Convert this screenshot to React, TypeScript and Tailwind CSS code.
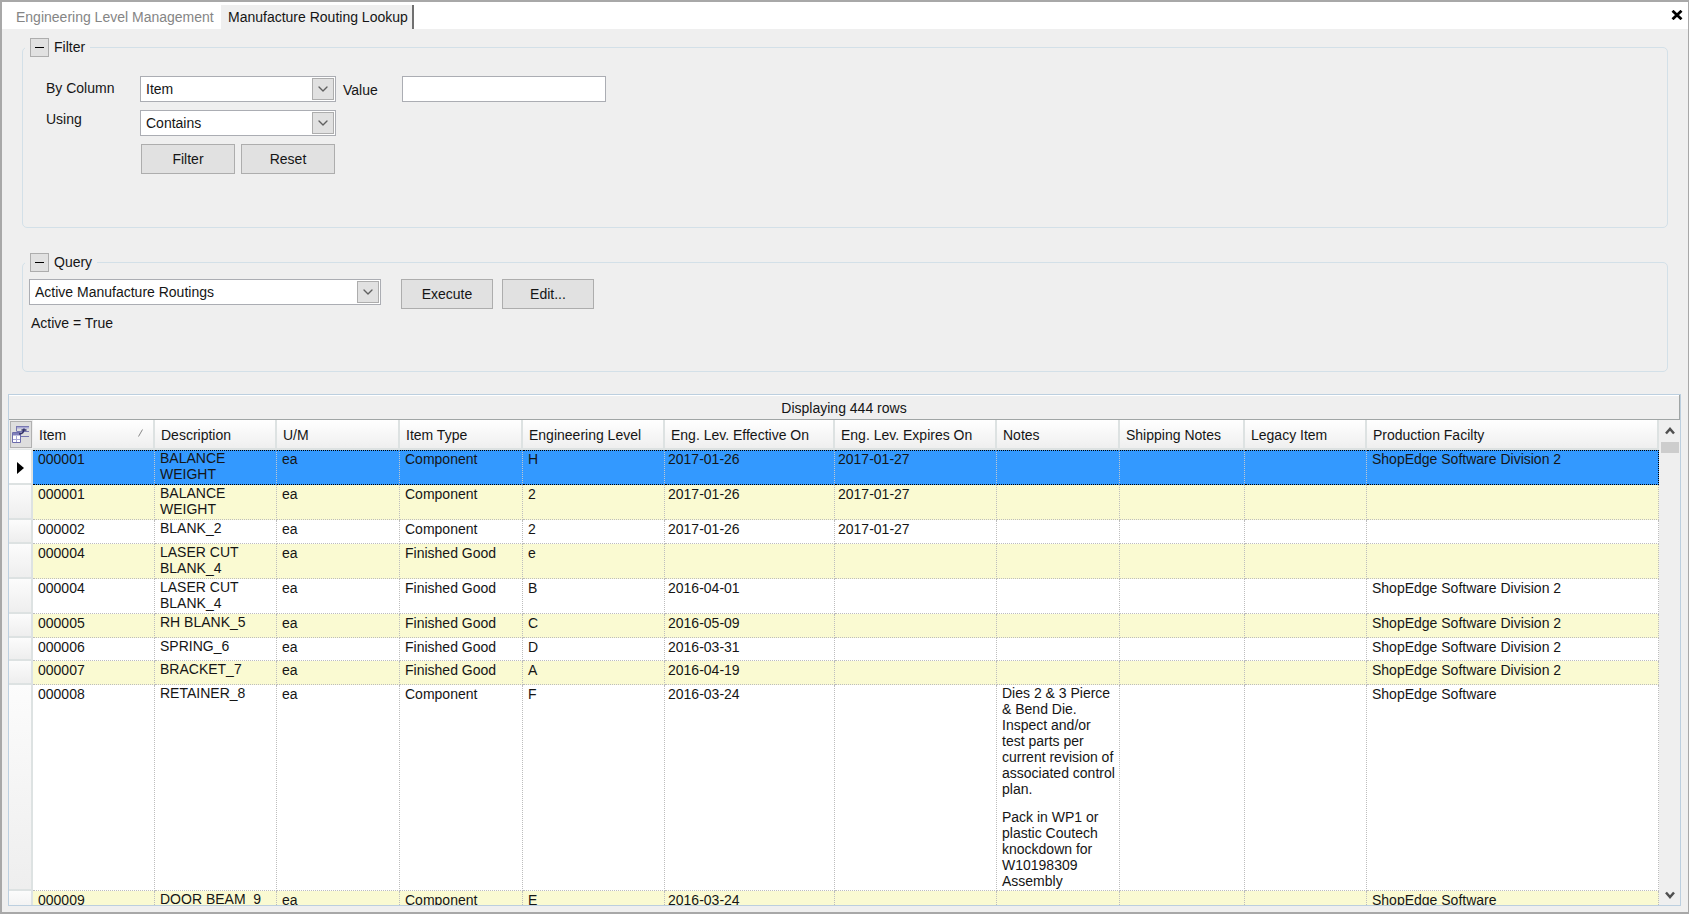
import { useState, type ReactNode } from "react";
import { ChevronDown } from "lucide-react";

type Row = {
  item: string;
  description: string;
  type: string;
  level: string;
  effective?: string;
  expires?: string;
  notes?: string[];
  facility?: string;
  height: string;
};

const ROWS: Row[] = [
  { item: "000001", description: "BALANCE WEIGHT", type: "Component", level: "H", effective: "2017-01-26", expires: "2017-01-27", facility: "ShopEdge Software Division 2", height: "h-[35px]" },
  { item: "000001", description: "BALANCE WEIGHT", type: "Component", level: "2", effective: "2017-01-26", expires: "2017-01-27", height: "h-[35px]" },
  { item: "000002", description: "BLANK_2", type: "Component", level: "2", effective: "2017-01-26", expires: "2017-01-27", height: "h-6" },
  { item: "000004", description: "LASER CUT BLANK_4", type: "Finished Good", level: "e", height: "h-[35px]" },
  { item: "000004", description: "LASER CUT BLANK_4", type: "Finished Good", level: "B", effective: "2016-04-01", facility: "ShopEdge Software Division 2", height: "h-[35px]" },
  { item: "000005", description: "RH BLANK_5", type: "Finished Good", level: "C", effective: "2016-05-09", facility: "ShopEdge Software Division 2", height: "h-6" },
  { item: "000006", description: "SPRING_6", type: "Finished Good", level: "D", effective: "2016-03-31", facility: "ShopEdge Software Division 2", height: "h-[23px]" },
  { item: "000007", description: "BRACKET_7", type: "Finished Good", level: "A", effective: "2016-04-19", facility: "ShopEdge Software Division 2", height: "h-6" },
  {
    item: "000008", description: "RETAINER_8", type: "Component", level: "F", effective: "2016-03-24", facility: "ShopEdge Software", height: "h-[206px]",
    notes: [
      "Dies 2 & 3 Pierce & Bend Die.\nInspect and/or\ntest parts per\ncurrent revision of associated control plan.",
      "Pack in WP1 or plastic Coutech knockdown for W10198309 Assembly",
    ],
  },
  { item: "000009", description: "DOOR BEAM_9", type: "Component", level: "E", effective: "2016-03-24", facility: "ShopEdge Software", height: "h-6" },
];

const HEADERS = [
  "Item", "Description", "U/M", "Item Type", "Engineering Level", "Eng. Lev. Effective On",
  "Eng. Lev. Expires On", "Notes", "Shipping Notes", "Legacy Item", "Production Facilty",
];

function Combo({ id, label, value, width }: { id: string; label?: string; value: string; width: string }) {
  return (
    <div className={`relative ${width}`}>
      <select id={id} aria-label={label} defaultValue={value} className="h-[26px] w-full appearance-none border border-[#abadb3] bg-white pr-6 pl-[5px] outline-none">
        <option>{value}</option>
      </select>
      <span className="pointer-events-none absolute top-[2px] right-[2px] flex h-[22px] w-[22px] items-center justify-center border border-[#adadad] bg-[#e1e1e1] text-[#606060]">
        <ChevronDown size={16} strokeWidth={2} />
      </span>
    </div>
  );
}

function PushButton({ children, width }: { children: ReactNode; width: string }) {
  return <button type="button" className={`h-[30px] border border-[#adadad] bg-[#e1e1e1] ${width}`}>{children}</button>;
}

function Group({ title, height, children }: { title: string; height: string; children: ReactNode }) {
  const [open, setOpen] = useState(true);
  return (
    <fieldset className={`rounded-[5px] border border-[#d3e0e8] px-[2px] ${open ? height : ""}`}>
      <legend className="flex items-center gap-[5px] px-[5px] leading-[19px]">
        <button type="button" aria-label={`Toggle ${title}`} aria-expanded={open} onClick={() => setOpen(!open)} className="flex h-[19px] w-[19px] items-center justify-center border border-[#adadad] bg-[#e1e1e1]">
          <span className="h-px w-[9px] bg-black" />
        </button>
        {title}
      </legend>
      {open && children}
    </fieldset>
  );
}

function ColumnChooserIcon() {
  return (
    <svg width="18" height="19" viewBox="0 0 18 19" fill="none">
      <path d="M4.500 1.500h12.500M4.500 1v5M4.500 6.500h12.500M9 11.500h8" stroke="#7777b0" />
      <path d="M5 2h12v1.500H5z" fill="#a9a9d6" />
      <path d="M.5 7.500h8v10h-8z" fill="#fff" stroke="#6c6cab" />
      <path d="M1 8h7v2.500H1z" fill="#8080bb" />
      <path d="M1 14.500h7M4.500 11v6" stroke="#a9a9d6" />
      <path d="M7 9c3 0 5-1 5-5.500M9.500 5h5" stroke="#2f2f66" strokeWidth="1.500" />
    </svg>
  );
}

export default function App() {
  return (
    <div className="flex h-screen flex-col overflow-hidden border-t-2 border-r border-b-2 border-l-2 border-[#a8a8a8] bg-[#efefef] font-['Liberation_Sans',Arial,sans-serif] text-[14px] leading-4 text-[#151515]">
      <nav className="flex h-[27px] shrink-0 items-end bg-white">
        <button type="button" className="h-6 w-[219px] pb-px pl-[14px] text-left text-[#858585]">Engineering Level Management</button>
        <button type="button" className="h-6 border-r-2 border-[#707070] bg-[#efefef] pr-1 pb-px pl-[7px]">Manufacture Routing Lookup</button>
        <button type="button" aria-label="Close" className="mr-[5px] mb-[9px] ml-auto">
          <svg width="12" height="10" viewBox="0 0 12 10" fill="none" stroke="#000" strokeWidth="2.800"><path d="M1.500 .8 10.500 9.200M10.500 .8 1.500 9.200" /></svg>
        </button>
      </nav>

      <div className="flex shrink-0 flex-col gap-[25px] pt-[9px] pr-[20px] pl-[20px]">
        <Group title="Filter" height="h-[190px]">
          <div className="grid grid-cols-[94px_196px_auto_1fr] items-center gap-y-2 pt-[19px] pl-[21px]">
            <label htmlFor="column" className="pb-[2px]">By Column</label>
            <Combo id="column" value="Item" width="w-[196px]" />
            <label htmlFor="value" className="w-[66px] pt-[2px] pl-[7px]">Value</label>
            <input id="value" className="h-[26px] w-[204px] border border-[#abadb3] bg-white px-1 outline-none" />
            <label htmlFor="using" className="pb-2">Using</label>
            <Combo id="using" value="Contains" width="w-[196px]" />
            <div className="col-span-2" />
            <div className="col-start-2 flex gap-[6px] pl-px">
              <PushButton width="w-[94px]">Filter</PushButton>
              <PushButton width="w-[94px]">Reset</PushButton>
            </div>
          </div>
        </Group>

        <Group title="Query" height="h-[119px]">
          <div className="flex items-start pt-[7px] pl-1">
            <Combo id="query" label="Saved query" value="Active Manufacture Routings" width="w-[352px]" />
            <div className="ml-5 flex gap-[9px]">
              <PushButton width="w-[92px]">Execute</PushButton>
              <PushButton width="w-[92px]">Edit...</PushButton>
            </div>
          </div>
          <p className="pt-[6px] pl-[6px]">Active = True</p>
        </Group>
      </div>

      <section className="mt-[22px] mr-[7px] mb-[6px] ml-[6px] flex min-h-0 flex-1 flex-col border border-[#bccfdf] bg-[#efefef]">
        <div className="h-[25px] shrink-0 border-r border-b border-[#a0a5a5] pt-[5px] text-center shadow-[inset_0_1px_0_#fff]">Displaying 444 rows</div>
        <div className="flex min-h-0 flex-1">
          <div className="min-w-0 flex-1 overflow-y-auto [scrollbar-width:none]">
            <table className="w-full table-fixed border-separate border-spacing-0">
              <colgroup>
                <col className="w-[24px]" />
                <col className="w-[122px]" />
                <col className="w-[122px]" />
                <col className="w-[123px]" />
                <col className="w-[123px]" />
                <col className="w-[142px]" />
                <col className="w-[170px]" />
                <col className="w-[162px]" />
                <col className="w-[123px]" />
                <col className="w-[125px]" />
                <col className="w-[122px]" />
                <col />
              </colgroup>
              <thead className="sticky top-0">
                <tr className="h-[30px]">
                  <th className="border-b border-[#e4e8e8] bg-[#efefef] p-0">
                    <span className="ml-px flex h-[27px] w-[22px] items-center justify-center border border-[#b0b0b0] bg-[#dedede]"><ColumnChooserIcon /></span>
                  </th>
                  {HEADERS.map((h) => (
                    <th key={h} className="border-r-2 border-b-2 border-[#dde2e2] bg-linear-to-b from-white to-[#efefef] p-0 pt-[2px] pl-[6px] text-left font-normal whitespace-nowrap">
                      <span className="flex items-center justify-between pr-[9px]">
                        {h}
                        {h === "Item" && <svg width="6" height="8" viewBox="0 0 6 8" className="mb-1"><path d="M.5 7.500 4.500 .5" stroke="#888" fill="none" /></svg>}
                      </span>
                    </th>
                  ))}
                </tr>
              </thead>
              <tbody>
                {ROWS.map((r, i) => {
                  const selected = i === 0;
                  const base = selected
                    ? "border-t border-b border-dotted border-y-black border-r border-r-[#c0c8d0] p-0 align-top last:border-r-black"
                    : "border-r border-b border-dotted border-[#bdbdbd] p-0 pt-px align-top";
                  const cell = `${base} pl-[5px]`;
                  const date = `${base} pl-[3px]`;
                  return (
                    <tr key={i} className={`${r.height} ${selected ? "bg-[#3399ff]" : i % 2 ? "bg-[#fafad2]" : "bg-white"}`}>
                      <td className={`border-r-2 border-b-2 border-[#dde2e2] p-0 ${selected ? "bg-white pt-[2px]" : "bg-linear-to-b from-[#fcfcfc] to-[#eeeeee]"}`}>
                        {selected && <svg width="7" height="12" viewBox="0 0 7 12" className="ml-2"><path d="M0 0 7 6 0 12z" fill="#000" /></svg>}
                      </td>
                      <td className={cell}>{r.item}</td>
                      <td className={cell}><div className="-mt-px">{r.description}</div></td>
                      <td className={cell}>ea</td>
                      <td className={cell}>{r.type}</td>
                      <td className={cell}>{r.level}</td>
                      <td className={date}>{r.effective}</td>
                      <td className={date}>{r.expires}</td>
                      <td className={cell}>
                        {r.notes && <div className="-mt-px flex flex-col gap-[12px] whitespace-pre-line">{r.notes.map((n) => <p key={n}>{n}</p>)}</div>}
                      </td>
                      <td className={cell} />
                      <td className={cell} />
                      <td className={cell}>{r.facility}</td>
                    </tr>
                  );
                })}
              </tbody>
            </table>
          </div>
          <div className="flex w-[21px] flex-col items-center bg-[#efefef] pt-[7px] pb-[6px] text-[#505050]">
            <svg width="10" height="8" viewBox="0 0 10 8" fill="none" stroke="currentColor" strokeWidth="2.500"><path d="M1 6.500 5 2l4 4.500" /></svg>
            <div className="mt-[7px] h-[11px] w-[18px] bg-[#cdcdcd]" />
            <svg width="10" height="8" viewBox="0 0 10 8" fill="none" stroke="currentColor" strokeWidth="2.500" className="mt-auto"><path d="M1 1.500 5 6l4-4.500" /></svg>
          </div>
        </div>
      </section>
    </div>
  );
}
